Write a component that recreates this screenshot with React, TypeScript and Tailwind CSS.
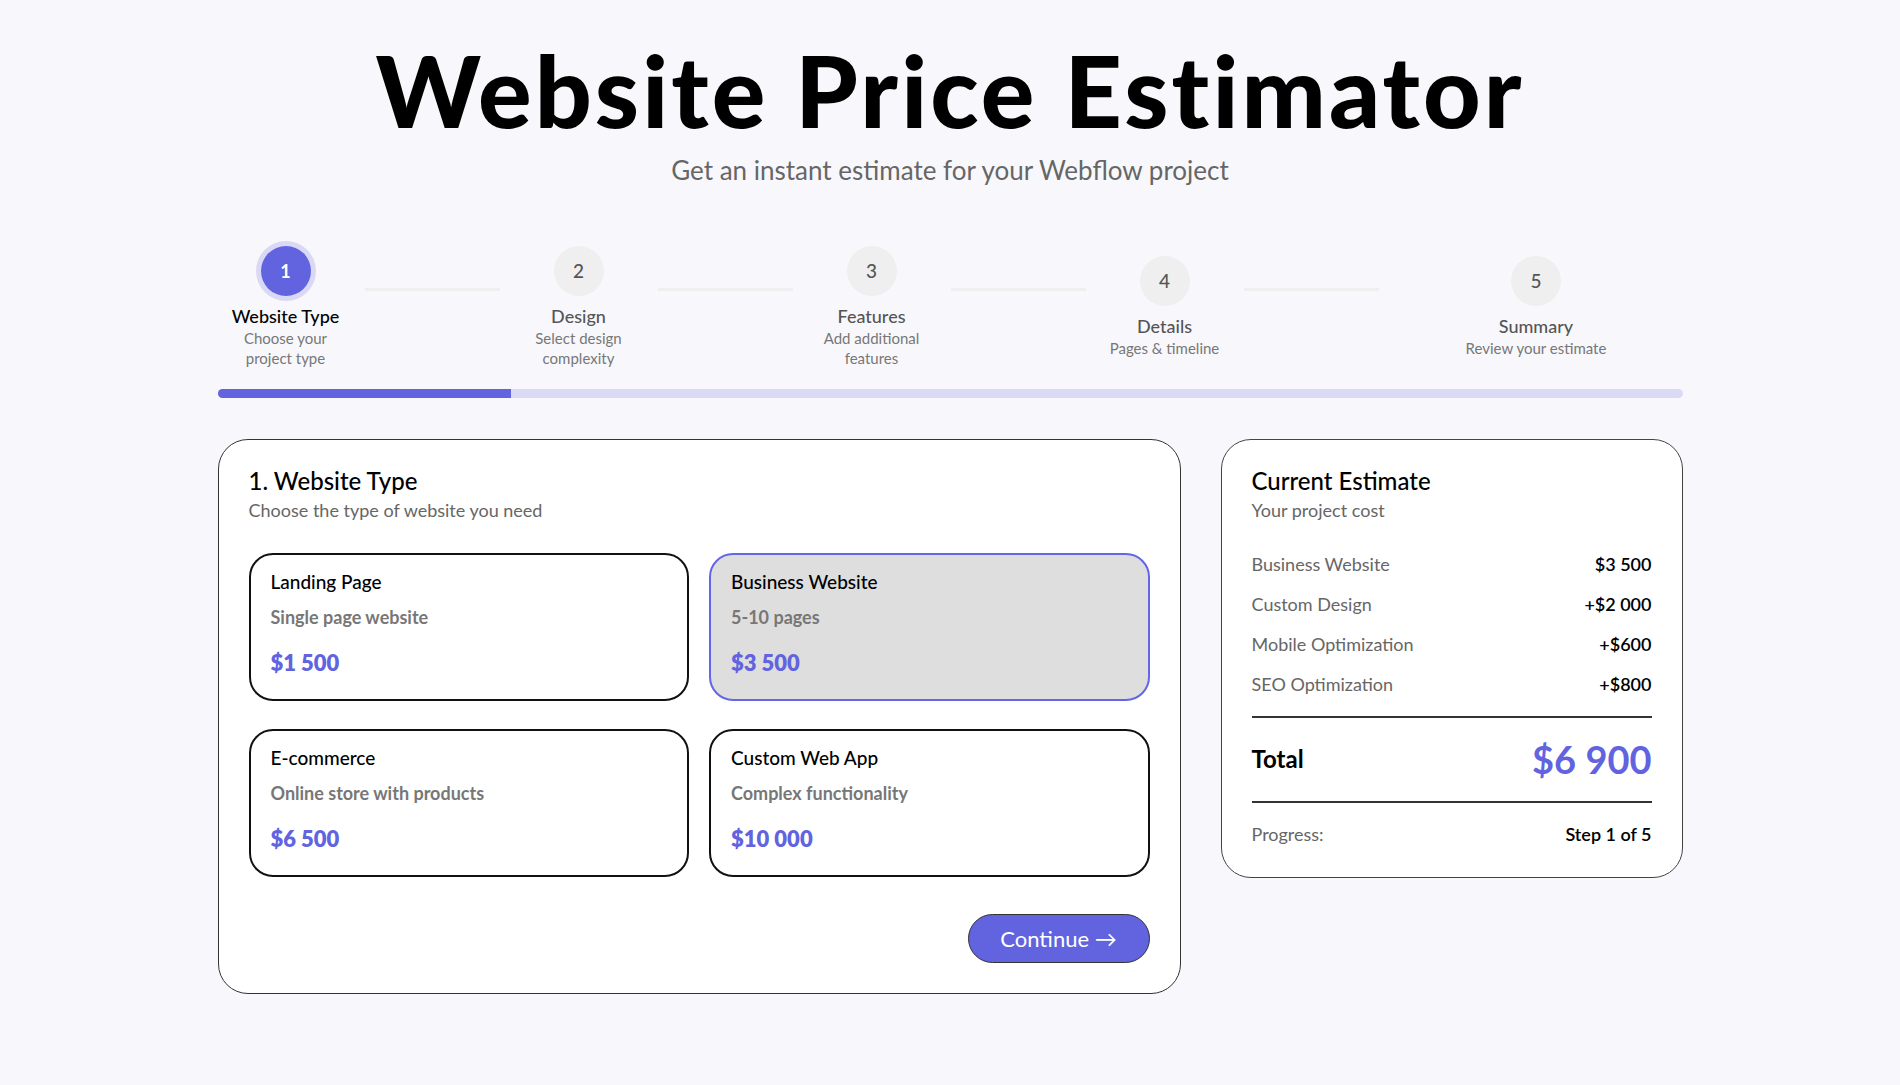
import React from 'react';

interface Step {
  num: number;
  title: string;
  desc: string;
}

interface Option {
  name: string;
  desc: string;
  price: string;
  selected?: boolean;
}

const steps: Step[] = [
  { num: 1, title: 'Website Type', desc: 'Choose your project type' },
  { num: 2, title: 'Design', desc: 'Select design complexity' },
  { num: 3, title: 'Features', desc: 'Add additional features' },
  { num: 4, title: 'Details', desc: 'Pages & timeline' },
  { num: 5, title: 'Summary', desc: 'Review your estimate' },
];

const options: Option[] = [
  { name: 'Landing Page', desc: 'Single page website', price: '$1 500' },
  { name: 'Business Website', desc: '5-10 pages', price: '$3 500', selected: true },
  { name: 'E-commerce', desc: 'Online store with products', price: '$6 500' },
  { name: 'Custom Web App', desc: 'Complex functionality', price: '$10 000' },
];

const lines = [
  { label: 'Business Website', value: '$3 500' },
  { label: 'Custom Design', value: '+$2 000' },
  { label: 'Mobile Optimization', value: '+$600' },
  { label: 'SEO Optimization', value: '+$800' },
];

function StepItem({ step, active, last }: { step: Step; active: boolean; last: boolean }) {
  return (
    <div className="flex-1 flex items-center">
      <div className={`flex flex-col items-center text-center pb-[2px] ${last ? 'flex-1' : 'w-[136px]'}`}>
        <div
          className={
            active
              ? 'w-[50px] h-[50px] rounded-full bg-[#6163df] text-white font-bold text-[18px] flex items-center justify-center shadow-[0_0_0_5px_#d9d9f6]'
              : 'w-[50px] h-[50px] rounded-full bg-[#efefef] text-[#555] font-medium text-[19px] flex items-center justify-center'
          }
        >
          {step.num}
        </div>
        <div
          className={`mt-[8px] text-[18px] leading-[24px] font-medium ${active ? 'text-black' : 'text-[#555]'}`}
        >
          {step.title}
        </div>
        <div className={`text-[15px] leading-[20px] text-[#777] ${last ? '' : 'max-w-[118px]'}`}>
          {step.desc}
        </div>
      </div>
      {!last && <div className="flex-1 h-[3px] bg-[#efefef] mx-[11px] mb-[38px]" />}
    </div>
  );
}

function OptionCard({ option }: { option: Option }) {
  return (
    <div
      className={`rounded-[24px] border-2 px-[20px] pt-[15px] pb-[21px] ${
        option.selected ? 'border-[#6366e8] bg-[#dedede]' : 'border-[#111] bg-white'
      }`}
    >
      <div className="text-[19px] leading-[24px] font-medium text-black">{option.name}</div>
      <div className="mt-[11px] text-[18px] leading-[24px] font-bold text-[#777]">{option.desc}</div>
      <div className="mt-[19px] text-[22px] leading-[30px] font-extrabold text-[#6163df]">{option.price}</div>
    </div>
  );
}

export default function App() {
  return (
    <div className="min-h-screen bg-[#f8f8fc] font-['Lato',sans-serif] text-black">
      <div className="w-[1465px] mx-auto pt-[39px] pb-10">
        <h1 className="text-center text-[100px] leading-none font-black tracking-[3.1px]">
          Website Price Estimator
        </h1>
        <p className="mt-[15px] text-center text-[26px] leading-[32px] text-[#666]">
          Get an instant estimate for your Webflow project
        </p>

        <div className="mt-[60px] flex items-center">
          {steps.map((s, i) => (
            <StepItem key={s.num} step={s} active={i === 0} last={i === steps.length - 1} />
          ))}
        </div>

        <div className="mt-[19px] h-[9px] rounded-full bg-[#dadaf6] overflow-hidden">
          <div className="h-full w-1/5 bg-[#6163df]" />
        </div>

        <div className="mt-[41px] grid grid-cols-[963px_462px] gap-[40px] items-start">
          <div className="bg-white border border-[#333] rounded-[30px] px-[30px] pt-[29px] pb-[30px]">
            <h2 className="text-[24px] leading-[24px] font-medium">1. Website Type</h2>
            <p className="mt-[5px] text-[18px] leading-[24px] text-[#666]">
              Choose the type of website you need
            </p>
            <div className="mt-[31px] grid grid-cols-2 gap-x-5 gap-y-[28px]">
              {options.map((o) => (
                <OptionCard key={o.name} option={o} />
              ))}
            </div>
            <div className="mt-[37px] flex justify-end">
              <button className="w-[182px] h-[49px] rounded-full bg-[#6163df] border border-[#333] text-white text-[22px] flex items-center justify-center">
                Continue →
              </button>
            </div>
          </div>

          <div className="bg-white border border-[#444] rounded-[30px] px-[30px] pt-[29px] pb-[31px]">
            <h2 className="text-[24px] leading-[24px] font-medium">Current Estimate</h2>
            <p className="mt-[5px] text-[18px] leading-[24px] text-[#666]">Your project cost</p>
            <div className="mt-[30px] flex flex-col gap-4">
              {lines.map((l) => (
                <div key={l.label} className="flex justify-between text-[18px] leading-[24px]">
                  <span className="text-[#666]">{l.label}</span>
                  <span className="font-semibold text-black">{l.value}</span>
                </div>
              ))}
            </div>
            <div className="mt-[20px] h-[2px] bg-[#333]" />
            <div className="mt-[19px] flex justify-between items-center h-[44px]">
              <span className="text-[24px] font-bold">Total</span>
              <span className="text-[38px] leading-[44px] font-bold text-[#6163df]">$6 900</span>
            </div>
            <div className="mt-[20px] h-[2px] bg-[#333]" />
            <div className="mt-[19px] flex justify-between text-[18px] leading-[24px]">
              <span className="text-[#666]">Progress:</span>
              <span className="font-semibold">Step 1 of 5</span>
            </div>
          </div>
        </div>
      </div>
    </div>
  );
}
